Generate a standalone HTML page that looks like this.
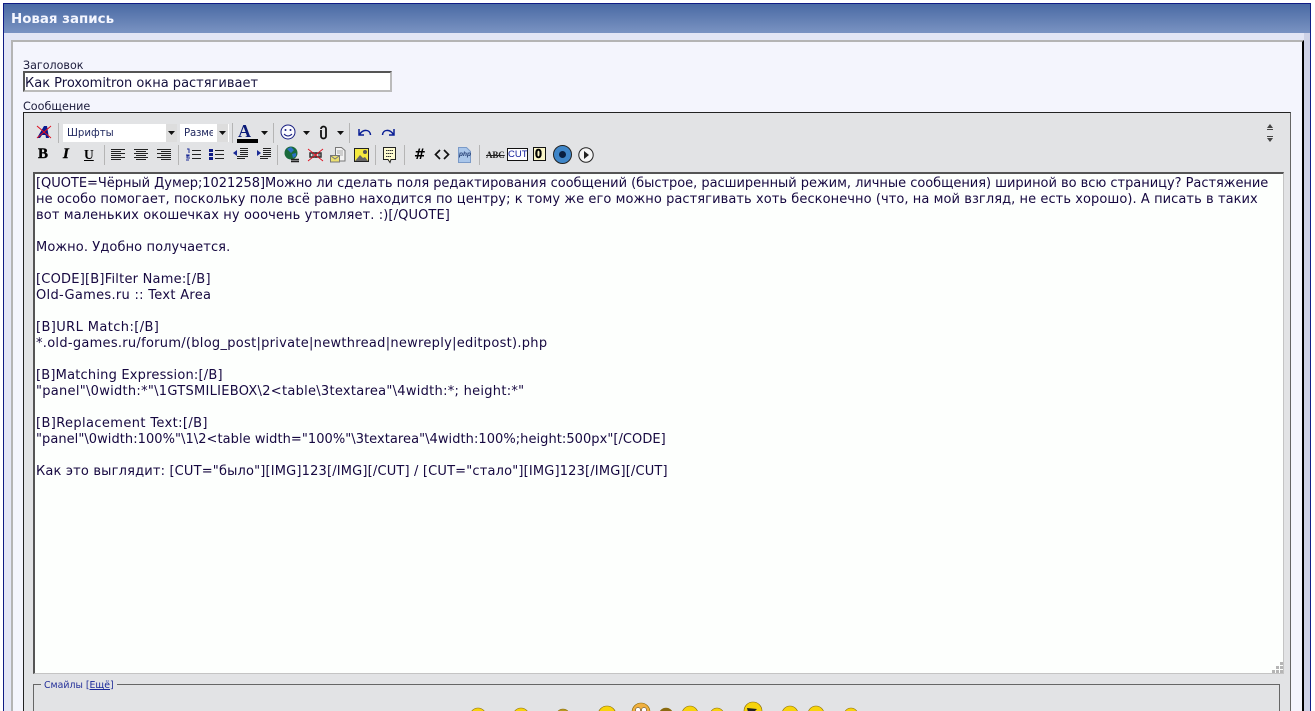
<!DOCTYPE html>
<html><head><meta charset="utf-8"><style>
html,body{margin:0;padding:0;width:1315px;height:711px;overflow:hidden;background:#fff}
*{box-sizing:border-box}
.a{position:absolute}
body{font-family:"DejaVu Sans","Liberation Sans",sans-serif;color:#000}
.t{position:absolute;white-space:pre;font-size:11px;line-height:13px}
.sep{position:absolute;width:1px;height:20px;background:#b5b5b5}
.ed{position:absolute;left:36px;top:176px;font-size:13px;line-height:16px;color:#160840;white-space:pre}
.ed div{height:16px}
svg{position:absolute;overflow:visible}
</style></head><body>
<div class="a" style="left:3px;top:3px;width:1308px;height:708px;border:1px solid #0f1c85;border-bottom:0;background:#d5d9ea"></div>
<div class="a" style="left:4px;top:4px;width:1306px;height:707px;background:#e3e6f5"></div>
<div class="a" style="left:1304px;top:33px;width:6px;height:678px;background:#ced2e6"></div>
<div class="a" style="left:4px;top:4px;width:1306px;height:29px;background:linear-gradient(#4a6aa4,#7a93c2)"></div>
<div class="t" style="left:11px;top:12px;font-weight:bold;font-size:13.4px;line-height:15px;color:#f4f6ff;font-family:'DejaVu Sans',sans-serif">Новая запись</div>
<div class="a" style="left:11px;top:40px;width:1293px;height:671px;background:#f4f5fd;border-left:2px solid #b4b4b4;border-top:2px solid #b4b4b4;border-right:2px solid #000"></div>
<div class="t" style="left:23px;top:59px;color:#1c1c3c;font-size:11.1px">Заголовок</div>
<div class="a" style="left:23px;top:71px;width:369px;height:21px;background:#fff;border:2px solid;border-color:#555 #bbb #bbb #555"></div>
<div class="t" style="left:25px;top:76px;font-size:13px;line-height:15px;color:#14103c">Как Proxomitron окна растягивает</div>
<div class="t" style="left:23px;top:100px;color:#1c1c3c;font-size:11.2px">Сообщение</div>

<div class="a" style="left:23px;top:112px;width:1268px;height:599px;background:#e2e3e5;border-left:1px solid #222;border-top:1px solid #222;border-right:1px solid #666"></div>

<!-- toolbar row 1 -->
<svg style="left:36px;top:124px" width="16" height="16" viewBox="0 0 16 16"><path d="M1 14L8 2h3l2 12h-3l-.5-3H6l-2 3z" fill="#0a1a90"/><path d="M1 2l14 12M15 2L1 14" stroke="#e01020" stroke-width="1"/></svg>
<div class="sep" style="left:58px;top:123px"></div>
<div class="a" style="left:63px;top:124px;width:114px;height:18px;background:#fff"></div>
<div class="a" style="left:166px;top:124px;width:11px;height:18px;background:#ddd"></div>
<div class="t" style="left:67px;top:127px;color:#222a60;font-size:10.2px">Шрифты</div>
<svg style="left:168px;top:131px" width="7" height="4"><path d="M0 0h7L3.500 4z" fill="#111"/></svg>
<div class="a" style="left:180px;top:124px;width:49px;height:18px;background:#fff"></div>
<div class="a" style="left:217px;top:124px;width:11px;height:18px;background:#ddd"></div>
<div class="t" style="left:184px;top:127px;color:#222a60;font-size:10.2px;letter-spacing:-.2px;width:29px;overflow:hidden">Размер</div>
<svg style="left:219px;top:131px" width="7" height="4"><path d="M0 0h7L3.500 4z" fill="#111"/></svg>
<div class="sep" style="left:232px;top:123px"></div>
<div class="t" style="left:238px;top:122px;font:bold 18px/18px 'Liberation Serif',serif;color:#0a1a78">A</div>
<div class="a" style="left:237px;top:139px;width:21px;height:4px;background:#000"></div>
<svg style="left:261px;top:131px" width="7" height="4"><path d="M0 0h7L3.500 4z" fill="#111"/></svg>
<div class="sep" style="left:273px;top:123px"></div>
<svg style="left:280px;top:124px" width="16" height="16" viewBox="0 0 16 16"><circle cx="8" cy="8" r="7" fill="#fbfbff" stroke="#181e80"/><circle cx="5.500" cy="6" r="1" fill="#181e80"/><circle cx="10.500" cy="6" r="1" fill="#181e80"/><path d="M4 10q4 4 8 0" fill="none" stroke="#181e80"/></svg>
<svg style="left:303px;top:131px" width="7" height="4"><path d="M0 0h7L3.500 4z" fill="#111"/></svg>
<svg style="left:319px;top:126px" width="9" height="14" viewBox="0 0 9 14"><path d="M2 3a2.500 2.500 0 0 1 5 0v7a2.500 2.500 0 0 1-5 0V4" fill="none" stroke="#111" stroke-width="1.800"/></svg>
<svg style="left:337px;top:131px" width="7" height="4"><path d="M0 0h7L3.500 4z" fill="#111"/></svg>
<div class="sep" style="left:349px;top:123px"></div>
<svg style="left:358px;top:127px" width="14" height="10" viewBox="0 0 14 10"><path d="M1 2v6h5M1.500 7.500C5 2 12 2 12.500 8" fill="none" stroke="#0a1f95" stroke-width="1.500"/></svg>
<svg style="left:381px;top:127px" width="14" height="10" viewBox="0 0 14 10"><path d="M13 2v6H8M12.500 7.500C9 2 2 2 1.500 8" fill="none" stroke="#0a1f95" stroke-width="1.500"/></svg>
<svg style="left:1267px;top:124px" width="6" height="18"><path d="M3 0l3 4H0zM0 5h6v1H0zM0 12h6v1H0zM0 14h6l-3 4z" fill="#444"/></svg>

<!-- toolbar row 2 -->
<div class="t" style="left:38px;top:146px;font:bold 15px/17px 'Liberation Serif',serif;-webkit-text-stroke:.4px #000">B</div>
<div class="t" style="left:63px;top:146px;font:italic bold 15px/17px 'Liberation Serif',serif;-webkit-text-stroke:.4px #000">I</div>
<div class="t" style="left:84px;top:146px;font:bold 13.5px/17px 'Liberation Serif',serif;text-decoration:underline">U</div>
<div class="sep" style="left:104px;top:145px"></div>
<svg style="left:111px;top:149px" width="14" height="11"><path d="M0 .5h14M0 2.500h10M0 4.500h14M0 6.500h10M0 8.500h14M0 10.500h10" stroke="#222"/></svg>
<svg style="left:134px;top:149px" width="14" height="11"><path d="M0 .5h14M2 2.500h10M0 4.500h14M2 6.500h10M0 8.500h14M2 10.500h10" stroke="#222"/></svg>
<svg style="left:157px;top:149px" width="14" height="11"><path d="M0 .5h14M4 2.500h10M0 4.500h14M4 6.500h10M0 8.500h14M4 10.500h10" stroke="#222"/></svg>
<div class="sep" style="left:178px;top:145px"></div>
<svg style="left:186px;top:148px" width="15" height="14"><path d="M6 2.500h9M6 6.500h9M6 10.500h9" stroke="#222"/><path d="M1 1h2v4M0 7h3v1H1v2h3M0 12h3" stroke="#1a2a95" fill="none"/></svg>
<svg style="left:209px;top:148px" width="15" height="13"><path d="M6 2.500h9M6 6.500h9M6 10.500h9" stroke="#222"/><path d="M0 1h4v3H0zM0 5h4v3H0zM0 9h4v3H0z" fill="#101c85"/></svg>
<svg style="left:233px;top:148px" width="15" height="13"><path d="M7 .5h8M7 2.500h8M7 4.500h8M7 6.500h8M4 8.500h11M4 10.500h8" stroke="#222"/><path d="M0 5l4-3v6z" fill="#1a2a95"/></svg>
<svg style="left:256px;top:148px" width="15" height="13"><path d="M7 .5h8M7 2.500h8M7 4.500h8M7 6.500h8M4 8.500h11M4 10.500h8" stroke="#222"/><path d="M5 5L1 2v6z" fill="#1a2a95"/></svg>
<div class="sep" style="left:277px;top:145px"></div>
<svg style="left:284px;top:146px" width="17" height="17" viewBox="0 0 17 17"><circle cx="7" cy="7" r="6.500" fill="#1a6a3a"/><path d="M3 3l4-2 3 3-3 3zM8 8l4-1v3l-3 2z" fill="#2a70c8"/><path d="M7 13.500h8M7 15.500h8" stroke="#222" stroke-width="1.500" fill="none"/></svg>
<svg style="left:308px;top:149px" width="15" height="12"><path d="M2 4h11v4H2z" fill="none" stroke="#333" stroke-width="1.500"/><path d="M5 3v6M8 3v6M11 3v6" stroke="#333"/><path d="M0 0l15 12M15 0L0 12" stroke="#e01020" stroke-width=".9"/></svg>
<svg style="left:330px;top:147px" width="16" height="16"><path d="M5.500.5h6l3.500 3v10.500H5.500z" fill="#f3f3f3" stroke="#777"/><path d="M7 4h6M7 6h6M10 8h3" stroke="#aaa"/><path d="M.5 8.500h9v6.500h-9z" fill="#ece070" stroke="#777"/><path d="M1 9l4 3 4-3" stroke="#777" fill="none"/></svg>
<svg style="left:354px;top:148px" width="15" height="14"><path d="M.5.5h14v13H.5z" fill="#f5ea40" stroke="#222"/><path d="M1 13l5-6 3 3 2-1 3 4z" fill="#666"/><circle cx="11" cy="4" r="2" fill="#555"/></svg>
<div class="sep" style="left:375px;top:145px"></div>
<svg style="left:383px;top:147px" width="13" height="16"><path d="M.5.5h12v12H8l-1 3-2-3H.5z" fill="#fdfbd0" stroke="#222"/><path d="M3 3.500h7M3 6.500h7M3 9.500h5" stroke="#333" stroke-dasharray="1.500 .5"/></svg>
<div class="sep" style="left:404px;top:145px"></div>
<div class="t" style="left:414px;top:147px;font:bold 14px/16px 'DejaVu Sans',sans-serif">#</div>
<svg style="left:434px;top:149px" width="16" height="11"><path d="M6 1L1.500 5.500 6 10M10 1l4.500 4.500L10 10" fill="none" stroke="#111" stroke-width="1.700"/></svg>
<svg style="left:458px;top:147px" width="13" height="16"><path d="M.5.5h8l4 4v11H.5z" fill="#a9c6ea" stroke="#7a9ac8"/></svg>
<div class="t" style="left:459px;top:151px;font:italic bold 6.5px/7px 'Liberation Sans',sans-serif;color:#203a70">php</div>
<div class="sep" style="left:479px;top:145px"></div>
<div class="t" style="left:486px;top:150px;font:bold 9px/10px 'Liberation Serif',serif;letter-spacing:-.1px;color:#222;text-decoration:line-through">ABC</div>
<div class="a" style="left:507px;top:148px;width:21px;height:13px;background:#fdfdff;border:1px solid #111"></div>
<div class="t" style="left:508px;top:149px;font:9.5px/11px 'Liberation Sans',sans-serif;color:#101c9a">CUT</div>
<div class="a" style="left:533px;top:147px;width:13px;height:14px;background:#fbf7c8;border:1px solid #111"></div>
<div class="t" style="left:535px;top:147px;font:bold 12.5px/14px 'Liberation Sans',sans-serif;-webkit-text-stroke:.5px #000">0</div>
<svg style="left:553px;top:145px" width="19" height="19"><circle cx="9.500" cy="9.500" r="9" fill="#3f86c8" stroke="#222"/><circle cx="9.500" cy="9.500" r="3.500" fill="#0a2040"/></svg>
<svg style="left:578px;top:147px" width="16" height="16"><circle cx="8" cy="8" r="7.200" fill="#f5f5f5" stroke="#222"/><path d="M6 4l5 4-5 4z" fill="#222"/></svg>

<!-- editor -->
<div class="a" style="left:33px;top:172px;width:1251px;height:502px;background:#fdfffd;border:2px solid;border-color:#555 #c4c4c4 #c4c4c4 #555;border-width:2px 1px 1px 2px"></div>
<div class="ed"><div style="letter-spacing:-.03px">[QUOTE=Чёрный Думер;1021258]Можно ли сделать поля редактирования сообщений (быстрое, расширенный режим, личные сообщения) шириной во всю страницу? Растяжение</div><div style="letter-spacing:.07px">не особо помогает, поскольку поле всё равно находится по центру; к тому же его можно растягивать хоть бесконечно (что, на мой взгляд, не есть хорошо). А писать в таких</div><div style="letter-spacing:.11px">вот маленьких окошечках ну ооочень утомляет. :)[/QUOTE]</div><div></div><div style="letter-spacing:.1px">Можно. Удобно получается.</div><div></div><div style="letter-spacing:.22px">[CODE][B]Filter Name:[/B]</div><div style="letter-spacing:.3px">Old-Games.ru :: Text Area</div><div></div><div style="letter-spacing:.4px">[B]URL Match:[/B]</div><div style="letter-spacing:.28px">*.old-games.ru/forum/(blog_post|private|newthread|newreply|editpost).php</div><div></div><div style="letter-spacing:.2px">[B]Matching Expression:[/B]</div><div style="letter-spacing:.28px">"panel"\0width:*"\1GTSMILIEBOX\2&lt;table\3textarea"\4width:*; height:*"</div><div></div><div style="letter-spacing:.38px">[B]Replacement Text:[/B]</div><div style="letter-spacing:.05px">"panel"\0width:100%"\1\2&lt;table width="100%"\3textarea"\4width:100%;height:500px"[/CODE]</div><div></div><div style="letter-spacing:.17px">Как это выглядит: [CUT="было"][IMG]123[/IMG][/CUT] / [CUT="стало"][IMG]123[/IMG][/CUT]</div></div>
<svg style="left:1271px;top:661px" width="12" height="12"><path d="M9 1h3v3H9zM5 5h3v3H5zM9 5h3v3H9zM1 9h3v3H1zM5 9h3v3H5zM9 9h3v3H9z" fill="#b5b5b5"/></svg>

<!-- fieldset -->
<div class="a" style="left:33px;top:684px;width:1247px;height:27px;border:1px solid #666;border-bottom:0"></div>
<div class="a" style="left:41px;top:680px;width:76px;height:9px;background:#e2e3e5"></div>
<div class="t" style="left:44px;top:679px;font-size:9.4px;color:#24309a">Смайлы [<span style="color:#1a2a9a;text-decoration:underline">Ещё</span>]</div>

<!-- smilies -->
<svg style="left:0;top:0" width="1315" height="711"><g fill="#f7d40c" stroke="#8a6a08" stroke-width=".6"><circle cx="478" cy="716" r="8"/><circle cx="521" cy="716" r="8"/><circle cx="563" cy="716" r="7" fill="#b89a20"/><circle cx="607" cy="715" r="9"/><circle cx="641" cy="712" r="9" fill="#f0b040"/><circle cx="666" cy="715" r="7" fill="#8a6a10"/><circle cx="690" cy="714" r="8"/><circle cx="717" cy="715" r="7"/><circle cx="753" cy="711" r="9"/><circle cx="790" cy="714" r="8"/><circle cx="816" cy="714" r="8"/><circle cx="851" cy="715" r="7"/></g><circle cx="638" cy="710" r="2.500" fill="#fff" stroke="#333" stroke-width=".5"/><circle cx="644" cy="710" r="2.500" fill="#fff" stroke="#333" stroke-width=".5"/><path d="M747 708l10 1-3 3h-6z" fill="#222"/></svg>
</body></html>
